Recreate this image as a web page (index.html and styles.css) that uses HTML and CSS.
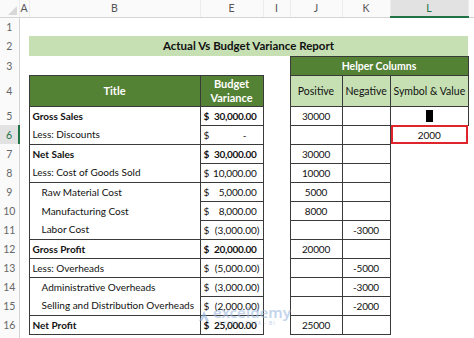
FILE: index.html
```
<!DOCTYPE html>
<html lang="en">
  <head>
    <meta charset="UTF-8" />
    <title>Actual Vs Budget Variance Report</title>
    <link rel="stylesheet" href="styles.css">
  </head>
  <body>
    <table class="sheet">
      <colgroup>
        <col style="width: 19px" />
        <col style="width: 10px" />
        <col style="width: 171px" />
        <col style="width: 63px" />
        <col style="width: 27px" />
        <col style="width: 52px" />
        <col style="width: 48px" />
        <col style="width: 78px" />
        <col style="width: 6px" />
      </colgroup>
      <tr class="colhead">
        <th class="corner"><span class="tri"></span></th>
        <th>A</th><th>B</th><th>E</th><th>I</th><th>J</th><th>K</th><th class="valgt">L</th><th></th>
      </tr>
      <tr class="r"><th class="rn">1</th><td></td><td></td><td></td><td></td><td></td><td></td><td></td><td></td></tr>
      <tr class="r2">
        <th class="rn">2</th><td></td>
        <td colspan="6" class="banner">Actual Vs Budget Variance Report</td>
        <td></td>
      </tr>
      <tr class="r">
        <th class="rn">3</th><td></td><td></td><td></td><td></td>
        <td colspan="3" class="hjelp">Helper Columns</td>
        <td></td>
      </tr>
      <tr class="r4">
        <th class="rn">4</th><td></td>
        <td class="hd">Title</td>
        <td class="hd">Budget<br />Variance</td>
        <td></td>
        <td class="sub">Positive</td>
        <td class="sub">Negative</td>
        <td class="sub">Symbol &amp; Value</td>
        <td></td>
      </tr>

      <!-- data -->
      <tr class="r">
        <th class="rn">5</th><td></td>
        <td class="ttl fed">Gross Sales</td>
        <td class="amt fed"><div class="acct"><span>$</span><span class="pos">30,000.00</span></div></td>
        <td></td><td class="num">30000</td><td class="num"></td>
        <td class="num"><span class="blok"></span></td><td></td>
      </tr>
      <tr class="r">
        <th class="rn valgt">6</th><td></td>
        <td class="ttl gb">Less: Discounts</td>
        <td class="amt"><div class="acct"><span>$</span><span class="nul">-</span></div></td>
        <td></td><td class="num"></td><td class="num"></td>
        <td class="valgt-celle">2000</td><td></td>
      </tr>
      <tr class="r">
        <th class="rn">7</th><td></td>
        <td class="ttl fed">Net Sales</td>
        <td class="amt fed"><div class="acct"><span>$</span><span class="pos">30,000.00</span></div></td>
        <td></td><td class="num">30000</td><td class="num"></td><td></td><td></td>
      </tr>
      <tr class="r">
        <th class="rn">8</th><td></td>
        <td class="ttl gb">Less: Cost of Goods Sold</td>
        <td class="amt"><div class="acct"><span>$</span><span class="pos">10,000.00</span></div></td>
        <td></td><td class="num">10000</td><td class="num"></td><td></td><td></td>
      </tr>
      <tr class="r">
        <th class="rn">9</th><td></td>
        <td class="ttl ind">Raw Material Cost</td>
        <td class="amt"><div class="acct"><span>$</span><span class="pos">5,000.00</span></div></td>
        <td></td><td class="num">5000</td><td class="num"></td><td></td><td></td>
      </tr>
      <tr class="r">
        <th class="rn">10</th><td></td>
        <td class="ttl ind">Manufacturing Cost</td>
        <td class="amt"><div class="acct"><span>$</span><span class="pos">8,000.00</span></div></td>
        <td></td><td class="num">8000</td><td class="num"></td><td></td><td></td>
      </tr>
      <tr class="r">
        <th class="rn">11</th><td></td>
        <td class="ttl ind gb">Labor Cost</td>
        <td class="amt"><div class="acct"><span>$</span><span>(3,000.00)</span></div></td>
        <td></td><td class="num"></td><td class="num">-3000</td><td></td><td></td>
      </tr>
      <tr class="r">
        <th class="rn">12</th><td></td>
        <td class="ttl fed gb">Gross Profit</td>
        <td class="amt fed"><div class="acct"><span>$</span><span class="pos">20,000.00</span></div></td>
        <td></td><td class="num">20000</td><td class="num"></td><td></td><td></td>
      </tr>
      <tr class="r">
        <th class="rn">13</th><td></td>
        <td class="ttl gb">Less: Overheads</td>
        <td class="amt"><div class="acct"><span>$</span><span>(5,000.00)</span></div></td>
        <td></td><td class="num"></td><td class="num">-5000</td><td></td><td></td>
      </tr>
      <tr class="r">
        <th class="rn">14</th><td></td>
        <td class="ttl ind">Administrative Overheads</td>
        <td class="amt"><div class="acct"><span>$</span><span>(3,000.00)</span></div></td>
        <td></td><td class="num"></td><td class="num">-3000</td><td></td><td></td>
      </tr>
      <tr class="r">
        <th class="rn">15</th><td></td>
        <td class="ttl ind gb">Selling and Distribution Overheads</td>
        <td class="amt"><div class="acct"><span>$</span><span>(2,000.00)</span></div></td>
        <td></td><td class="num"></td><td class="num">-2000</td><td></td><td></td>
      </tr>
      <tr class="r">
        <th class="rn">16</th><td></td>
        <td class="ttl fed gb">Net Profit</td>
        <td class="amt fed"><div class="acct"><span>$</span><span class="pos">25,000.00</span></div></td>
        <td></td><td class="num">25000</td><td class="num"></td><td></td><td></td>
      </tr>
      <tr class="r"><th class="rn"></th><td></td><td></td><td></td><td></td><td></td><td></td><td></td><td></td></tr>
    </table>

    <!-- vandmaerke -->
    <div class="wm">
      <svg width="14" height="14" viewBox="0 0 14 14">
        <path d="M2 12 L7 2 L12 12 Z" fill="#8fb1da" />
        <path d="M5 12 L7 8 L9 12 Z" fill="#fff" />
      </svg>
      <div>
        <div class="wm-navn">exceldemy</div>
        <div class="wm-sub">EXCEL · DATA · BI</div>
      </div>
    </div>
  </body>
</html>
```

FILE: styles.css
```
* {
  padding: 0;
  margin: 0;
  box-sizing: border-box;
}

body {
  background-color: #fff;
  font-family: Lato, "Liberation Sans", sans-serif;
  font-size: 10.5px;
  color: #111;
  overflow: hidden;
  position: relative;
}

.sheet {
  border-collapse: collapse;
  table-layout: fixed;
  width: 474px;
}

.sheet td,
.sheet th {
  padding: 0 3px;
  white-space: nowrap;
  overflow: hidden;
}

/* kolonne og raekke overskrifter */

.colhead th {
  height: 17px;
  font-weight: normal;
  color: #555;
  background-color: #fafafa;
  border-bottom: 1px solid #d4d4d4;
  border-right: 1px solid #ececec;
  text-align: center;
  padding: 0;
}

.colhead th.valgt {
  background-color: #e2e2e2;
  border-bottom: 2px solid #217346;
  color: #217346;
}

.corner {
  position: relative;
}

.tri {
  position: absolute;
  right: 2px;
  bottom: 2px;
  width: 0;
  height: 0;
  border-left: 9px solid transparent;
  border-bottom: 9px solid #d8d8d8;
}

.rn {
  color: #666;
  font-weight: normal;
  background-color: #fafafa;
  border-right: 1px solid #d4d4d4;
  text-align: center;
  padding: 0 !important;
}

.rn.valgt {
  background-color: #e2e2e2;
  border-right: 2px solid #217346;
  color: #217346;
}

.r {
  height: 19px;
}

.r2 {
  height: 20px;
}

.r4 {
  height: 31px;
}

/* overskrifter */

.banner {
  background-color: #c6e0b4;
  font-weight: 700;
  text-align: center;
  font-size: 11.5px;
}

.hjelp {
  background-color: #548235;
  color: #fff;
  font-weight: 700;
  text-align: center;
  border: 1px solid #3a3a3a;
}

.hd {
  background-color: #548235;
  color: #fff;
  font-weight: 700;
  text-align: center;
  border: 1px solid #3a3a3a;
  line-height: 14px;
  font-size: 11px;
}

.sub {
  background-color: #c6e0b4;
  text-align: center;
  border: 1px solid #3a3a3a;
}

/* data celler */

.ttl {
  border-left: 1px solid #3a3a3a;
  border-right: 1px solid #3a3a3a;
  font-size: 10px;
}

.ttl.ind {
  padding-left: 12px !important;
}

.gb {
  border-bottom: 1px solid #3a3a3a;
}

.fed {
  font-weight: 700;
}

.amt {
  border: 1px solid #3a3a3a;
  font-size: 10px;
}

.amt .pos {
  letter-spacing: -0.2px;
}

.amt.fed .pos {
  letter-spacing: -0.3px;
}

.acct {
  display: flex;
  justify-content: space-between;
}

.pos {
  padding-right: 3px;
}

.nul {
  padding-right: 13px;
}

.num {
  text-align: center;
  border: 1px solid #3a3a3a;
  font-size: 10px;
  letter-spacing: -0.2px;
}

.blok {
  display: inline-block;
  width: 7px;
  height: 12px;
  background-color: #000;
  vertical-align: middle;
}

.valgt-celle {
  text-align: center;
  position: relative;
  overflow: visible !important;
  font-size: 10px;
}

.valgt-celle::after {
  content: "";
  position: absolute;
  left: 0;
  top: -1px;
  right: 0;
  bottom: 0;
  border: 2px solid #e0242b;
}

/* vandmaerke */

.wm {
  position: absolute;
  left: 197px;
  top: 305px;
  display: flex;
  align-items: center;
  gap: 2px;
  opacity: 0.6;
}

.wm-navn {
  font-family: "Noto Sans", sans-serif;
  font-size: 15px;
  line-height: 15px;
  color: #9db9de;
  font-weight: 600;
}

.wm-sub {
  font-size: 5px;
  color: #9db9de;
  letter-spacing: 1px;
  padding-left: 6px;
}
```
